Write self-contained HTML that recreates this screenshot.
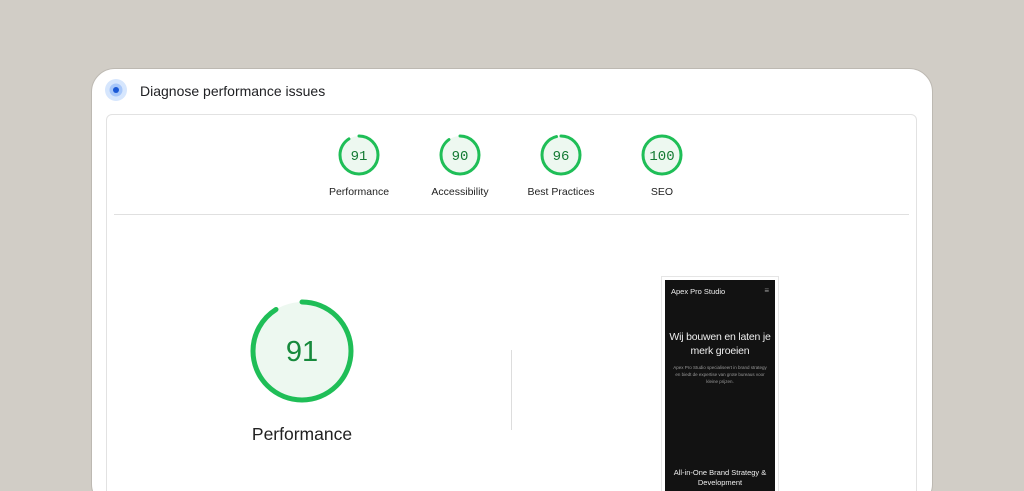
<!DOCTYPE html>
<html><head><style>
*{margin:0;padding:0;box-sizing:border-box}
html,body{width:1024px;height:491px;overflow:hidden}
body{background:#d1cdc6;position:relative;font-family:"Liberation Sans",Arial,sans-serif}
.card{position:absolute;left:91px;top:68px;width:842px;height:440px;background:#fff;border-radius:24px;border:1px solid #bdb9b2}
.panel{position:absolute;left:106px;top:114px;width:811px;height:400px;border:1px solid #e2e2e2;border-radius:6px;background:#fff}
.t{position:absolute;font-size:13.5px;color:#222;white-space:nowrap}
.lab{position:absolute;font-size:10.5px;color:#222;transform:translateX(-50%);white-space:nowrap}
</style></head><body>
<div class="card"></div>
<div class="panel"></div>
<svg style="position:absolute;left:104px;top:78px" width="24" height="24"><circle cx="12" cy="12" r="11" fill="#d6e6fd"/><circle cx="12" cy="12" r="6.5" fill="#a7c7fa"/><circle cx="12" cy="12" r="3" fill="#1a58d6"/></svg>
<div class="t" style="left:140px;top:83px;font-size:14px;color:#202124">Diagnose performance issues</div>
<div style="position:absolute;left:114px;top:214px;width:795px;height:1px;background:#e0e0e0"></div>
<svg style="position:absolute;left:0;top:0" width="1024" height="491">
<g fill="#e8f6ec" stroke="#1fbe57" stroke-width="3" stroke-linecap="round">
<circle cx="359" cy="155" r="19" fill="#edf8f0" stroke="none"/>
<circle cx="359" cy="155" r="19" fill="none" stroke-dasharray="108.6 119.4" transform="rotate(-90 359 155)"/>
<circle cx="460" cy="155" r="19" fill="#edf8f0" stroke="none"/>
<circle cx="460" cy="155" r="19" fill="none" stroke-dasharray="107.4 119.4" transform="rotate(-90 460 155)"/>
<circle cx="561" cy="155" r="19" fill="#edf8f0" stroke="none"/>
<circle cx="561" cy="155" r="19" fill="none" stroke-dasharray="114.6 119.4" transform="rotate(-90 561 155)"/>
<circle cx="662" cy="155" r="19" fill="#edf8f0"/>
<circle cx="302" cy="351" r="49" fill="#edf8f0" stroke="none"/>
<circle cx="302" cy="351" r="49" fill="none" stroke-width="5" stroke-dasharray="280 307.9" transform="rotate(-90 302 351)"/>
</g>
<g font-family="Liberation Mono,monospace" fill="#137a33" font-size="14" text-anchor="middle">
<text x="359" y="160">91</text><text x="460" y="160">90</text><text x="561" y="160">96</text><text x="662" y="160">100</text>
</g>
<text x="302" y="361" font-family="Liberation Sans,sans-serif" font-size="29" fill="#178a3c" text-anchor="middle">91</text>
<line x1="511.5" y1="350" x2="511.5" y2="430" stroke="#ddd"/>
</svg>
<div class="lab" style="left:359px;top:186px">Performance</div>
<div class="lab" style="left:460px;top:186px">Accessibility</div>
<div class="lab" style="left:561px;top:186px">Best Practices</div>
<div class="lab" style="left:662px;top:186px">SEO</div>
<div class="lab" style="left:302px;top:424px;font-size:17.5px">Performance</div>
<div style="position:absolute;left:661px;top:276px;width:118px;height:220px;background:#fff;border:1px solid #e5e5e5;padding:3px 3px 0">
<div style="background:#121212;width:110px;height:220px;position:relative;color:#eee">
<div style="position:absolute;left:6px;top:7px;font-size:7.5px">Apex Pro Studio</div>
<div style="position:absolute;right:6px;top:6px;font-size:8px;color:#999">≡</div>
<div style="position:absolute;left:-4px;width:118px;top:50px;text-align:center;font-size:10.5px;line-height:14px;letter-spacing:-0.2px">Wij bouwen en laten je<br>merk groeien</div>
<div style="position:absolute;left:6px;width:98px;top:84px;text-align:center;font-size:4.5px;line-height:7px;color:#999">Apex Pro Studio specialiseert in brand strategy en biedt de expertise van grote bureaus voor kleine prijzen.</div>
<div style="position:absolute;left:0;width:110px;top:188px;text-align:center;font-size:7.5px;line-height:10px">All-in-One Brand Strategy &amp; Development</div>
</div></div>
</body></html>
